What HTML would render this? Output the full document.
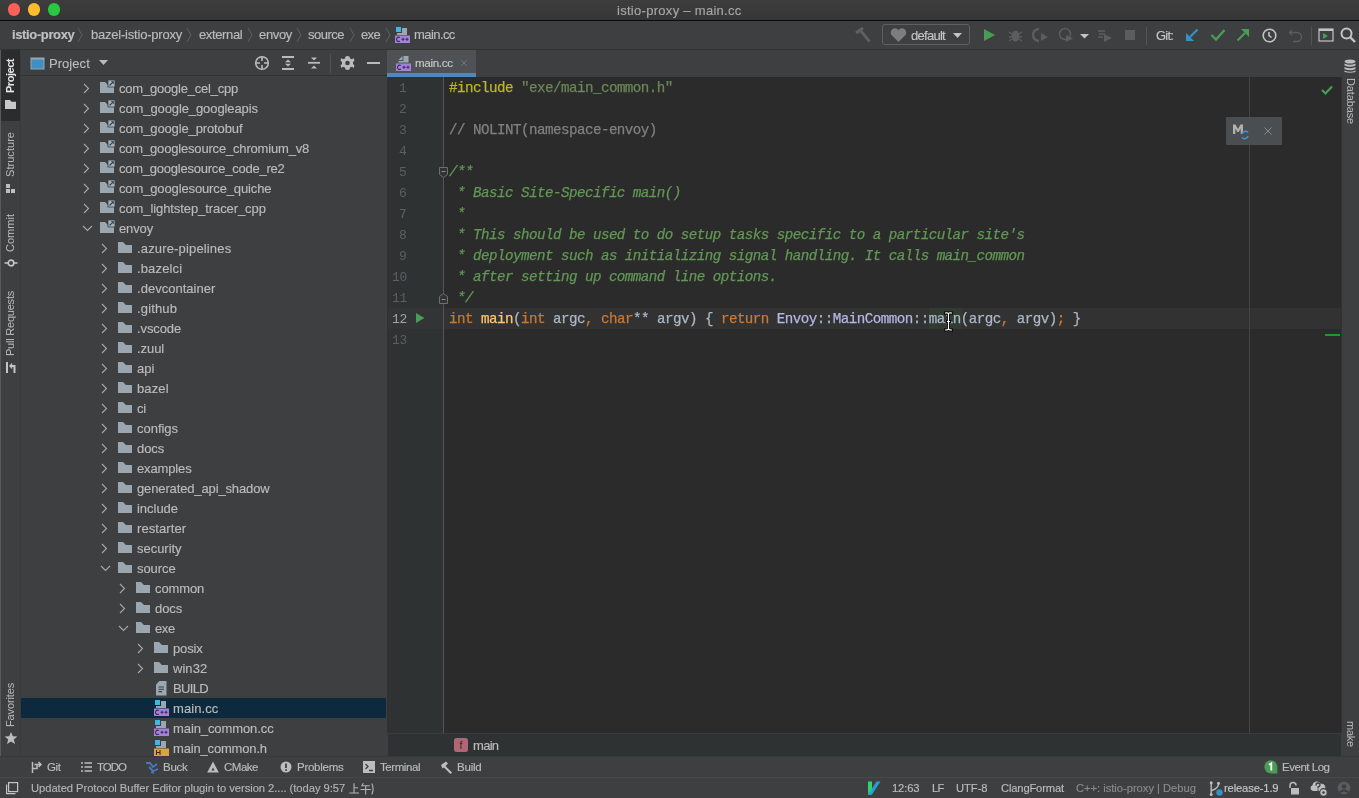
<!DOCTYPE html>
<html><head><meta charset="utf-8"><title>istio-proxy – main.cc</title>
<style>
html,body{margin:0;padding:0;width:1359px;height:798px;overflow:hidden;background:#3c3f41;}
body{position:relative;font-family:"Liberation Sans",sans-serif;}
.t{position:absolute;white-space:nowrap;font-family:"Liberation Sans",sans-serif;-webkit-text-stroke:0.15px currentColor;}
.m{position:absolute;white-space:pre;font-family:"Liberation Mono",monospace;font-size:14.2px;letter-spacing:-0.52px;line-height:14px;-webkit-text-stroke:0.25px currentColor;}
svg{overflow:visible}
.t,.m{will-change:transform}
</style></head><body>
<div style="position:absolute;left:0px;top:0px;width:1359px;height:20px;background:linear-gradient(#3d3d3d,#363636);"></div>
<div style="position:absolute;left:0px;top:20px;width:1359px;height:1px;background:#0a0a0a;"></div>
<div style="position:absolute;left:7.5px;top:3.4px;width:12.4px;height:12.4px;border-radius:50%;background:#fe5f57"></div>
<div style="position:absolute;left:27.6px;top:3.4px;width:12.4px;height:12.4px;border-radius:50%;background:#febc2e"></div>
<div style="position:absolute;left:47.5px;top:3.4px;width:12.4px;height:12.4px;border-radius:50%;background:#28c840"></div>
<div class="t" style="left:617.4px;top:4.00px;font-size:13px;line-height:13px;color:#a6a6a6;font-weight:normal;letter-spacing:0.291px;">istio-proxy – main.cc</div>
<div style="position:absolute;left:0px;top:21px;width:1359px;height:28px;background:#3e3f41;"></div>
<div style="position:absolute;left:0px;top:49px;width:1359px;height:1px;background:#323232;"></div>
<div class="t" style="left:12.4px;top:28.00px;font-size:13px;line-height:13px;color:#c0c0c0;font-weight:bold;letter-spacing:-0.369px;">istio-proxy</div>
<div class="t" style="left:91px;top:28.00px;font-size:13px;line-height:13px;color:#bbbbbb;font-weight:normal;letter-spacing:-0.215px;">bazel-istio-proxy</div>
<div class="t" style="left:199px;top:28.00px;font-size:13px;line-height:13px;color:#bbbbbb;font-weight:normal;letter-spacing:-0.369px;">external</div>
<div class="t" style="left:259px;top:28.00px;font-size:13px;line-height:13px;color:#bbbbbb;font-weight:normal;letter-spacing:-0.338px;">envoy</div>
<div class="t" style="left:308px;top:28.00px;font-size:13px;line-height:13px;color:#bbbbbb;font-weight:normal;letter-spacing:-0.503px;">source</div>
<div class="t" style="left:361px;top:28.00px;font-size:13px;line-height:13px;color:#bbbbbb;font-weight:normal;letter-spacing:-0.653px;">exe</div>
<div class="t" style="left:413.7px;top:28.00px;font-size:13px;line-height:13px;color:#bbbbbb;font-weight:normal;letter-spacing:-0.570px;">main.cc</div>
<svg style="position:absolute;left:77px;top:27px;" width="6" height="16" viewBox="0 0 6 16"><path d="M1 1 L5 8 L1 15" fill="none" stroke="#5e6060" stroke-width="1"/></svg>
<svg style="position:absolute;left:186px;top:27px;" width="6" height="16" viewBox="0 0 6 16"><path d="M1 1 L5 8 L1 15" fill="none" stroke="#5e6060" stroke-width="1"/></svg>
<svg style="position:absolute;left:246.5px;top:27px;" width="6" height="16" viewBox="0 0 6 16"><path d="M1 1 L5 8 L1 15" fill="none" stroke="#5e6060" stroke-width="1"/></svg>
<svg style="position:absolute;left:295.5px;top:27px;" width="6" height="16" viewBox="0 0 6 16"><path d="M1 1 L5 8 L1 15" fill="none" stroke="#5e6060" stroke-width="1"/></svg>
<svg style="position:absolute;left:349px;top:27px;" width="6" height="16" viewBox="0 0 6 16"><path d="M1 1 L5 8 L1 15" fill="none" stroke="#5e6060" stroke-width="1"/></svg>
<svg style="position:absolute;left:385px;top:27px;" width="6" height="16" viewBox="0 0 6 16"><path d="M1 1 L5 8 L1 15" fill="none" stroke="#5e6060" stroke-width="1"/></svg>
<svg style="position:absolute;left:395px;top:27px;" width="16" height="16" viewBox="0 0 16 16"><rect x="1" y="0" width="5" height="5" fill="#40b6e0"/><path d="M7 1 H12 V8 H2 V6 H7 Z" fill="#9aa7b0"/><rect x="0" y="8.5" width="15" height="7.5" fill="#a283d8"/><path d="M4.8 10.6 A2 2.2 0 1 0 4.8 14" stroke="#3a2a5a" stroke-width="1.1" fill="none"/><path d="M6.5 12.3 H9.5 M8 10.8 V13.8 M10.5 12.3 H13.5 M12 10.8 V13.8" stroke="#3a2a5a" stroke-width="1.1"/></svg>
<svg style="position:absolute;left:854px;top:26px;" width="17" height="17" viewBox="0 0 17 17"><path d="M2 7 L9 2" stroke="#5f5f5f" stroke-width="3.2" stroke-linecap="butt"/><path d="M6.5 4.5 L15.5 15.5" stroke="#5f5f5f" stroke-width="2.8"/></svg>
<div style="position:absolute;left:882px;top:24px;width:88px;height:21px;border:1px solid #5e6060;border-radius:3px;box-sizing:border-box"></div>
<svg style="position:absolute;left:890px;top:27px;" width="17" height="16" viewBox="0 0 17 16"><path d="M8.5 15 L1 7.5 Q0 3 3.5 1.5 Q6.5 0.5 8.5 3 Q10.5 0.5 13.5 1.5 Q17 3 16 7.5 Z" fill="#7d7d7d"/></svg>
<div class="t" style="left:911px;top:28.50px;font-size:13px;line-height:13px;color:#c4c4c4;font-weight:normal;letter-spacing:-0.719px;">default</div>
<svg style="position:absolute;left:953px;top:33px;" width="9" height="6" viewBox="0 0 9 6"><path d="M0 0 H9 L4.5 5 Z" fill="#c4c4c4"/></svg>
<svg style="position:absolute;left:984px;top:29px;" width="11" height="12" viewBox="0 0 11 12"><path d="M0 0 L11 6 L0 12 Z" fill="#499c54"/></svg>
<svg style="position:absolute;left:1008px;top:27px;" width="15" height="16" viewBox="0 0 15 16"><ellipse cx="7.5" cy="9" rx="4" ry="5.5" fill="#5d5d5d"/><path d="M1 5 L4 7 M14 5 L11 7 M1 10 H3.5 M14 10 H11.5 M1 14 L4 12 M14 14 L11 12" stroke="#5d5d5d" stroke-width="1.3"/></svg>
<svg style="position:absolute;left:1033px;top:27px;" width="16" height="16" viewBox="0 0 16 16"><path d="M6 2 A6 6 0 1 0 6 14" stroke="#5d5d5d" stroke-width="2.5" fill="none"/><path d="M8 6 L15 10 L8 14 Z" fill="#5d5d5d"/></svg>
<svg style="position:absolute;left:1058px;top:27px;" width="16" height="16" viewBox="0 0 16 16"><circle cx="7" cy="7" r="5.5" stroke="#5d5d5d" stroke-width="1.5" fill="none"/><path d="M8 8 L15 11.5 L8 15 Z" fill="#5d5d5d"/></svg>
<svg style="position:absolute;left:1080px;top:34px;" width="9" height="5" viewBox="0 0 9 5"><path d="M0 0 H9 L4.5 4.5 Z" fill="#c4c4c4"/></svg>
<svg style="position:absolute;left:1097px;top:27px;" width="16" height="16" viewBox="0 0 16 16"><path d="M1 4 H8 M2 7 H8 M1 10 H6" stroke="#5d5d5d" stroke-width="1.5"/><path d="M7 7 L15 11 L7 15 Z" fill="#5d5d5d"/></svg>
<div style="position:absolute;left:1124.6px;top:30px;width:10.5px;height:10px;background:#5d5d5d;"></div>
<div style="position:absolute;left:1146px;top:27px;width:1px;height:18px;background:#545454;"></div>
<div class="t" style="left:1156px;top:28.50px;font-size:13px;line-height:13px;color:#c4c4c4;font-weight:normal;letter-spacing:-0.806px;">Git:</div>
<svg style="position:absolute;left:1185px;top:28px;" width="14" height="14" viewBox="0 0 14 14"><path d="M12.5 1.5 L5 9" stroke="#3592c4" stroke-width="2.2" fill="none"/><path d="M1 13 V5 L9 13 Z" fill="#3592c4"/></svg>
<svg style="position:absolute;left:1210px;top:28px;" width="16" height="14" viewBox="0 0 16 14"><path d="M1.5 7 L6 11.5 L14.5 2" stroke="#499c54" stroke-width="2.4" fill="none"/></svg>
<svg style="position:absolute;left:1236px;top:28px;" width="14" height="14" viewBox="0 0 14 14"><path d="M1.5 12.5 L9 5" stroke="#499c54" stroke-width="2.2" fill="none"/><path d="M13 1 V9 L5 1 Z" fill="#499c54"/></svg>
<svg style="position:absolute;left:1262px;top:28px;" width="15" height="15" viewBox="0 0 15 15"><circle cx="7.5" cy="7.5" r="6.3" stroke="#c4c4c4" stroke-width="1.6" fill="none"/><path d="M7 4 V7.5 L9.5 9.5" stroke="#c4c4c4" stroke-width="1.6" fill="none"/></svg>
<svg style="position:absolute;left:1288px;top:28px;" width="15" height="15" viewBox="0 0 15 15"><path d="M4 2 L1.5 4.5 L4 7 M1.5 4.5 H9 A4.5 4.5 0 0 1 9 13.5 H5" stroke="#5d5d5d" stroke-width="1.3" fill="none"/></svg>
<div style="position:absolute;left:1311px;top:27px;width:1px;height:18px;background:#545454;"></div>
<svg style="position:absolute;left:1318px;top:28px;" width="16" height="14" viewBox="0 0 16 14"><rect x="1" y="1" width="14" height="12" stroke="#c4c4c4" stroke-width="1.2" fill="none"/><rect x="1" y="1" width="14" height="2" fill="#c4c4c4"/><path d="M5 5 L10 8 L5 11 Z" fill="#499c54"/></svg>
<svg style="position:absolute;left:1340px;top:27px;" width="16" height="16" viewBox="0 0 16 16"><circle cx="6.5" cy="6.5" r="5" stroke="#c4c4c4" stroke-width="2" fill="none"/><path d="M10 10 L15 15" stroke="#c4c4c4" stroke-width="2.4"/></svg>
<div style="position:absolute;left:0px;top:50px;width:21px;height:707px;background:#3e3f41;"></div>
<div style="position:absolute;left:0px;top:50px;width:1px;height:748px;background:#5a5a5a;"></div>
<div style="position:absolute;left:1px;top:50px;width:20px;height:71px;background:#2a2c2e;"></div>
<div style="position:absolute;left:20px;top:50px;width:1px;height:707px;background:#393a3c;"></div>
<div class="t" style="-webkit-text-stroke:0;left:5px;top:93px;font-size:11px;line-height:11px;color:#e6e6e6;font-weight:bold;letter-spacing:-0.470px;transform-origin:0 0;transform:rotate(-90deg);">Project</div>
<svg style="position:absolute;left:5px;top:100px;" width="12" height="10" viewBox="0 0 12 10"><path d="M0 0 H5 L6.5 1.8 H11 V9 H0 Z" fill="#c8c8c8"/></svg>
<div class="t" style="-webkit-text-stroke:0;left:5px;top:177px;font-size:11px;line-height:11px;color:#bbbbbb;font-weight:normal;letter-spacing:0.041px;transform-origin:0 0;transform:rotate(-90deg);">Structure</div>
<svg style="position:absolute;left:5px;top:183px;" width="12" height="11" viewBox="0 0 12 11"><rect x="1" y="1" width="4" height="4" fill="#bdbdbd"/><rect x="1" y="6" width="4" height="4" fill="#bdbdbd"/><rect x="6" y="6" width="4" height="4" fill="#bdbdbd"/></svg>
<div class="t" style="-webkit-text-stroke:0;left:5px;top:252px;font-size:11px;line-height:11px;color:#bbbbbb;font-weight:normal;letter-spacing:0.019px;transform-origin:0 0;transform:rotate(-90deg);">Commit</div>
<svg style="position:absolute;left:4px;top:256px;" width="14" height="14" viewBox="0 0 14 14"><circle cx="7" cy="7" r="2.8" stroke="#c4c4c4" stroke-width="1.7" fill="none"/><path d="M0.5 7 H4 M10 7 H13.5" stroke="#c4c4c4" stroke-width="1.7"/></svg>
<div class="t" style="-webkit-text-stroke:0;left:5px;top:356px;font-size:11px;line-height:11px;color:#bbbbbb;font-weight:normal;letter-spacing:-0.221px;transform-origin:0 0;transform:rotate(-90deg);">Pull Requests</div>
<svg style="position:absolute;left:5px;top:361px;" width="12" height="13" viewBox="0 0 12 13"><rect x="1" y="1" width="2" height="11" fill="#c4c4c4"/><path d="M9.5 12 V5 H6" stroke="#c4c4c4" stroke-width="2" fill="none"/><path d="M4 5 L7.2 1.8 V8.2 Z" fill="#c4c4c4"/></svg>
<div class="t" style="-webkit-text-stroke:0;left:5px;top:727px;font-size:11px;line-height:11px;color:#bbbbbb;font-weight:normal;letter-spacing:-0.137px;transform-origin:0 0;transform:rotate(-90deg);">Favorites</div>
<svg style="position:absolute;left:4px;top:731px;" width="14" height="14" viewBox="0 0 14 14"><path d="M7 1 L8.8 5.3 L13.3 5.5 L9.8 8.4 L11 12.9 L7 10.4 L3 12.9 L4.2 8.4 L0.7 5.5 L5.2 5.3 Z" fill="#bdbdbd"/></svg>
<div style="position:absolute;left:21px;top:50px;width:366px;height:707px;background:#3e3f41;"></div>
<div style="position:absolute;left:21px;top:75px;width:366px;height:1px;background:#323232;"></div>
<svg style="position:absolute;left:30px;top:57px;" width="15" height="13" viewBox="0 0 15 13"><rect x="0.5" y="0.5" width="14" height="12" fill="#9aa7b0"/><rect x="1.5" y="2.5" width="12" height="9" fill="#3d8fc4"/></svg>
<div class="t" style="left:49.4px;top:57.00px;font-size:13px;line-height:13px;color:#bbbbbb;font-weight:normal;letter-spacing:0.048px;">Project</div>
<svg style="position:absolute;left:99px;top:60px;" width="9" height="6" viewBox="0 0 9 6"><path d="M0 0 H9 L4.5 5 Z" fill="#bbbbbb"/></svg>
<svg style="position:absolute;left:254px;top:55px;" width="16" height="16" viewBox="0 0 16 16"><circle cx="8" cy="8" r="6.3" stroke="#bbbbbb" stroke-width="1.6" fill="none"/><path d="M8 2 V6 M8 10 V14 M2 8 H6 M10 8 H14" stroke="#bbbbbb" stroke-width="1.6"/></svg>
<svg style="position:absolute;left:281px;top:55px;" width="14" height="16" viewBox="0 0 14 16"><path d="M1 2 H13 M1 14 H13" stroke="#bbbbbb" stroke-width="2"/><path d="M4 7.2 L7 4.6 L10 7.2 Z M4 8.8 L7 11.4 L10 8.8 Z" fill="#bbbbbb"/></svg>
<svg style="position:absolute;left:307px;top:55px;" width="14" height="16" viewBox="0 0 14 16"><path d="M1 7.8 H13" stroke="#bbbbbb" stroke-width="1.8"/><path d="M4 2.5 H10 L7 5.5 Z M4 13.5 H10 L7 10.5 Z" fill="#bbbbbb"/></svg>
<div style="position:absolute;left:330px;top:54px;width:1px;height:19px;background:#505254;"></div>
<svg style="position:absolute;left:340px;top:55px;" width="15" height="16" viewBox="0 0 15 16"><path d="M7.5 1 L9.5 1.6 L10 3.6 L12 4.2 L13.6 2.9 L14.5 5.6 L13 7 L13 9 L14.5 10.4 L13.6 13.1 L12 11.8 L10 12.4 L9.5 14.4 L7.5 15 L5.5 14.4 L5 12.4 L3 11.8 L1.4 13.1 L0.5 10.4 L2 9 L2 7 L0.5 5.6 L1.4 2.9 L3 4.2 L5 3.6 L5.5 1.6 Z" fill="#bbbbbb"/><circle cx="7.5" cy="8" r="2.3" fill="#3e3f41"/></svg>
<div style="position:absolute;left:367px;top:62px;width:13px;height:2px;background:#bbbbbb;"></div>
<svg style="position:absolute;left:83.2px;top:82.5px;" width="7" height="11" viewBox="0 0 7 11"><path d="M1 1 L5.5 5.5 L1 10" stroke="#a8a8a8" stroke-width="1.1" fill="none"/></svg>
<svg style="position:absolute;left:100px;top:80px;" width="15" height="14" viewBox="0 0 15 14"><path d="M0 2 H5 L8 5 H14 V13 H0 Z" fill="#9aa7b0"/><rect x="8" y="0" width="7" height="7" fill="#a9b4bb" stroke="#3e3f41" stroke-width="0.8"/><path d="M9.5 5.5 L13.2 1.8" stroke="#2a4560" stroke-width="1.1"/><path d="M10.8 1.2 H13.8 V4.2 Z" fill="#2a4560"/></svg>
<div class="t" style="left:118.5px;top:82.00px;font-size:13px;line-height:13px;color:#bbbbbb;font-weight:normal;letter-spacing:-0.215px;">com_google_cel_cpp</div>
<svg style="position:absolute;left:83.2px;top:102.5px;" width="7" height="11" viewBox="0 0 7 11"><path d="M1 1 L5.5 5.5 L1 10" stroke="#a8a8a8" stroke-width="1.1" fill="none"/></svg>
<svg style="position:absolute;left:100px;top:100px;" width="15" height="14" viewBox="0 0 15 14"><path d="M0 2 H5 L8 5 H14 V13 H0 Z" fill="#9aa7b0"/><rect x="8" y="0" width="7" height="7" fill="#a9b4bb" stroke="#3e3f41" stroke-width="0.8"/><path d="M9.5 5.5 L13.2 1.8" stroke="#2a4560" stroke-width="1.1"/><path d="M10.8 1.2 H13.8 V4.2 Z" fill="#2a4560"/></svg>
<div class="t" style="left:118.5px;top:102.00px;font-size:13px;line-height:13px;color:#bbbbbb;font-weight:normal;letter-spacing:-0.098px;">com_google_googleapis</div>
<svg style="position:absolute;left:83.2px;top:122.5px;" width="7" height="11" viewBox="0 0 7 11"><path d="M1 1 L5.5 5.5 L1 10" stroke="#a8a8a8" stroke-width="1.1" fill="none"/></svg>
<svg style="position:absolute;left:100px;top:120px;" width="15" height="14" viewBox="0 0 15 14"><path d="M0 2 H5 L8 5 H14 V13 H0 Z" fill="#9aa7b0"/><rect x="8" y="0" width="7" height="7" fill="#a9b4bb" stroke="#3e3f41" stroke-width="0.8"/><path d="M9.5 5.5 L13.2 1.8" stroke="#2a4560" stroke-width="1.1"/><path d="M10.8 1.2 H13.8 V4.2 Z" fill="#2a4560"/></svg>
<div class="t" style="left:118.5px;top:122.00px;font-size:13px;line-height:13px;color:#bbbbbb;font-weight:normal;letter-spacing:-0.124px;">com_google_protobuf</div>
<svg style="position:absolute;left:83.2px;top:142.5px;" width="7" height="11" viewBox="0 0 7 11"><path d="M1 1 L5.5 5.5 L1 10" stroke="#a8a8a8" stroke-width="1.1" fill="none"/></svg>
<svg style="position:absolute;left:100px;top:140px;" width="15" height="14" viewBox="0 0 15 14"><path d="M0 2 H5 L8 5 H14 V13 H0 Z" fill="#9aa7b0"/><rect x="8" y="0" width="7" height="7" fill="#a9b4bb" stroke="#3e3f41" stroke-width="0.8"/><path d="M9.5 5.5 L13.2 1.8" stroke="#2a4560" stroke-width="1.1"/><path d="M10.8 1.2 H13.8 V4.2 Z" fill="#2a4560"/></svg>
<div class="t" style="left:118.5px;top:142.00px;font-size:13px;line-height:13px;color:#bbbbbb;font-weight:normal;letter-spacing:-0.179px;">com_googlesource_chromium_v8</div>
<svg style="position:absolute;left:83.2px;top:162.5px;" width="7" height="11" viewBox="0 0 7 11"><path d="M1 1 L5.5 5.5 L1 10" stroke="#a8a8a8" stroke-width="1.1" fill="none"/></svg>
<svg style="position:absolute;left:100px;top:160px;" width="15" height="14" viewBox="0 0 15 14"><path d="M0 2 H5 L8 5 H14 V13 H0 Z" fill="#9aa7b0"/><rect x="8" y="0" width="7" height="7" fill="#a9b4bb" stroke="#3e3f41" stroke-width="0.8"/><path d="M9.5 5.5 L13.2 1.8" stroke="#2a4560" stroke-width="1.1"/><path d="M10.8 1.2 H13.8 V4.2 Z" fill="#2a4560"/></svg>
<div class="t" style="left:118.5px;top:162.00px;font-size:13px;line-height:13px;color:#bbbbbb;font-weight:normal;letter-spacing:-0.232px;">com_googlesource_code_re2</div>
<svg style="position:absolute;left:83.2px;top:182.5px;" width="7" height="11" viewBox="0 0 7 11"><path d="M1 1 L5.5 5.5 L1 10" stroke="#a8a8a8" stroke-width="1.1" fill="none"/></svg>
<svg style="position:absolute;left:100px;top:180px;" width="15" height="14" viewBox="0 0 15 14"><path d="M0 2 H5 L8 5 H14 V13 H0 Z" fill="#9aa7b0"/><rect x="8" y="0" width="7" height="7" fill="#a9b4bb" stroke="#3e3f41" stroke-width="0.8"/><path d="M9.5 5.5 L13.2 1.8" stroke="#2a4560" stroke-width="1.1"/><path d="M10.8 1.2 H13.8 V4.2 Z" fill="#2a4560"/></svg>
<div class="t" style="left:118.5px;top:182.00px;font-size:13px;line-height:13px;color:#bbbbbb;font-weight:normal;letter-spacing:-0.130px;">com_googlesource_quiche</div>
<svg style="position:absolute;left:83.2px;top:202.5px;" width="7" height="11" viewBox="0 0 7 11"><path d="M1 1 L5.5 5.5 L1 10" stroke="#a8a8a8" stroke-width="1.1" fill="none"/></svg>
<svg style="position:absolute;left:100px;top:200px;" width="15" height="14" viewBox="0 0 15 14"><path d="M0 2 H5 L8 5 H14 V13 H0 Z" fill="#9aa7b0"/><rect x="8" y="0" width="7" height="7" fill="#a9b4bb" stroke="#3e3f41" stroke-width="0.8"/><path d="M9.5 5.5 L13.2 1.8" stroke="#2a4560" stroke-width="1.1"/><path d="M10.8 1.2 H13.8 V4.2 Z" fill="#2a4560"/></svg>
<div class="t" style="left:118.5px;top:202.00px;font-size:13px;line-height:13px;color:#bbbbbb;font-weight:normal;letter-spacing:-0.086px;">com_lightstep_tracer_cpp</div>
<svg style="position:absolute;left:82.2px;top:224.5px;" width="11" height="7" viewBox="0 0 11 7"><path d="M1 1 L5.5 5.5 L10 1" stroke="#a8a8a8" stroke-width="1.1" fill="none"/></svg>
<svg style="position:absolute;left:100px;top:220px;" width="15" height="14" viewBox="0 0 15 14"><path d="M0 2 H5 L8 5 H14 V13 H0 Z" fill="#9aa7b0"/><rect x="8" y="0" width="7" height="7" fill="#a9b4bb" stroke="#3e3f41" stroke-width="0.8"/><path d="M9.5 5.5 L13.2 1.8" stroke="#2a4560" stroke-width="1.1"/><path d="M10.8 1.2 H13.8 V4.2 Z" fill="#2a4560"/></svg>
<div class="t" style="left:118.5px;top:222.00px;font-size:13px;line-height:13px;color:#bbbbbb;font-weight:normal;letter-spacing:-0.138px;">envoy</div>
<svg style="position:absolute;left:101.2px;top:242.5px;" width="7" height="11" viewBox="0 0 7 11"><path d="M1 1 L5.5 5.5 L1 10" stroke="#a8a8a8" stroke-width="1.1" fill="none"/></svg>
<svg style="position:absolute;left:118px;top:240px;" width="15" height="14" viewBox="0 0 15 14"><path d="M0 2 H5 L8 5 H14 V13 H0 Z" fill="#9aa7b0"/></svg>
<div class="t" style="left:136.5px;top:242.00px;font-size:13px;line-height:13px;color:#bbbbbb;font-weight:normal;letter-spacing:0.158px;">.azure-pipelines</div>
<svg style="position:absolute;left:101.2px;top:262.5px;" width="7" height="11" viewBox="0 0 7 11"><path d="M1 1 L5.5 5.5 L1 10" stroke="#a8a8a8" stroke-width="1.1" fill="none"/></svg>
<svg style="position:absolute;left:118px;top:260px;" width="15" height="14" viewBox="0 0 15 14"><path d="M0 2 H5 L8 5 H14 V13 H0 Z" fill="#9aa7b0"/></svg>
<div class="t" style="left:136.5px;top:262.00px;font-size:13px;line-height:13px;color:#bbbbbb;font-weight:normal;letter-spacing:0.140px;">.bazelci</div>
<svg style="position:absolute;left:101.2px;top:282.5px;" width="7" height="11" viewBox="0 0 7 11"><path d="M1 1 L5.5 5.5 L1 10" stroke="#a8a8a8" stroke-width="1.1" fill="none"/></svg>
<svg style="position:absolute;left:118px;top:280px;" width="15" height="14" viewBox="0 0 15 14"><path d="M0 2 H5 L8 5 H14 V13 H0 Z" fill="#9aa7b0"/></svg>
<div class="t" style="left:136.5px;top:282.00px;font-size:13px;line-height:13px;color:#bbbbbb;font-weight:normal;letter-spacing:0.019px;">.devcontainer</div>
<svg style="position:absolute;left:101.2px;top:302.5px;" width="7" height="11" viewBox="0 0 7 11"><path d="M1 1 L5.5 5.5 L1 10" stroke="#a8a8a8" stroke-width="1.1" fill="none"/></svg>
<svg style="position:absolute;left:118px;top:300px;" width="15" height="14" viewBox="0 0 15 14"><path d="M0 2 H5 L8 5 H14 V13 H0 Z" fill="#9aa7b0"/></svg>
<div class="t" style="left:136.5px;top:302.00px;font-size:13px;line-height:13px;color:#bbbbbb;font-weight:normal;letter-spacing:0.152px;">.github</div>
<svg style="position:absolute;left:101.2px;top:322.5px;" width="7" height="11" viewBox="0 0 7 11"><path d="M1 1 L5.5 5.5 L1 10" stroke="#a8a8a8" stroke-width="1.1" fill="none"/></svg>
<svg style="position:absolute;left:118px;top:320px;" width="15" height="14" viewBox="0 0 15 14"><path d="M0 2 H5 L8 5 H14 V13 H0 Z" fill="#9aa7b0"/></svg>
<div class="t" style="left:136.5px;top:322.00px;font-size:13px;line-height:13px;color:#bbbbbb;font-weight:normal;letter-spacing:-0.115px;">.vscode</div>
<svg style="position:absolute;left:101.2px;top:342.5px;" width="7" height="11" viewBox="0 0 7 11"><path d="M1 1 L5.5 5.5 L1 10" stroke="#a8a8a8" stroke-width="1.1" fill="none"/></svg>
<svg style="position:absolute;left:118px;top:340px;" width="15" height="14" viewBox="0 0 15 14"><path d="M0 2 H5 L8 5 H14 V13 H0 Z" fill="#9aa7b0"/></svg>
<div class="t" style="left:136.5px;top:342.00px;font-size:13px;line-height:13px;color:#bbbbbb;font-weight:normal;letter-spacing:-0.052px;">.zuul</div>
<svg style="position:absolute;left:101.2px;top:362.5px;" width="7" height="11" viewBox="0 0 7 11"><path d="M1 1 L5.5 5.5 L1 10" stroke="#a8a8a8" stroke-width="1.1" fill="none"/></svg>
<svg style="position:absolute;left:118px;top:360px;" width="15" height="14" viewBox="0 0 15 14"><path d="M0 2 H5 L8 5 H14 V13 H0 Z" fill="#9aa7b0"/></svg>
<div class="t" style="left:136.5px;top:362.00px;font-size:13px;line-height:13px;color:#bbbbbb;font-weight:normal;letter-spacing:0.050px;">api</div>
<svg style="position:absolute;left:101.2px;top:382.5px;" width="7" height="11" viewBox="0 0 7 11"><path d="M1 1 L5.5 5.5 L1 10" stroke="#a8a8a8" stroke-width="1.1" fill="none"/></svg>
<svg style="position:absolute;left:118px;top:380px;" width="15" height="14" viewBox="0 0 15 14"><path d="M0 2 H5 L8 5 H14 V13 H0 Z" fill="#9aa7b0"/></svg>
<div class="t" style="left:136.5px;top:382.00px;font-size:13px;line-height:13px;color:#bbbbbb;font-weight:normal;letter-spacing:0.124px;">bazel</div>
<svg style="position:absolute;left:101.2px;top:402.5px;" width="7" height="11" viewBox="0 0 7 11"><path d="M1 1 L5.5 5.5 L1 10" stroke="#a8a8a8" stroke-width="1.1" fill="none"/></svg>
<svg style="position:absolute;left:118px;top:400px;" width="15" height="14" viewBox="0 0 15 14"><path d="M0 2 H5 L8 5 H14 V13 H0 Z" fill="#9aa7b0"/></svg>
<div class="t" style="left:136.5px;top:402.00px;font-size:13px;line-height:13px;color:#bbbbbb;font-weight:normal;letter-spacing:-0.144px;">ci</div>
<svg style="position:absolute;left:101.2px;top:422.5px;" width="7" height="11" viewBox="0 0 7 11"><path d="M1 1 L5.5 5.5 L1 10" stroke="#a8a8a8" stroke-width="1.1" fill="none"/></svg>
<svg style="position:absolute;left:118px;top:420px;" width="15" height="14" viewBox="0 0 15 14"><path d="M0 2 H5 L8 5 H14 V13 H0 Z" fill="#9aa7b0"/></svg>
<div class="t" style="left:136.5px;top:422.00px;font-size:13px;line-height:13px;color:#bbbbbb;font-weight:normal;letter-spacing:-0.027px;">configs</div>
<svg style="position:absolute;left:101.2px;top:442.5px;" width="7" height="11" viewBox="0 0 7 11"><path d="M1 1 L5.5 5.5 L1 10" stroke="#a8a8a8" stroke-width="1.1" fill="none"/></svg>
<svg style="position:absolute;left:118px;top:440px;" width="15" height="14" viewBox="0 0 15 14"><path d="M0 2 H5 L8 5 H14 V13 H0 Z" fill="#9aa7b0"/></svg>
<div class="t" style="left:136.5px;top:442.00px;font-size:13px;line-height:13px;color:#bbbbbb;font-weight:normal;letter-spacing:-0.065px;">docs</div>
<svg style="position:absolute;left:101.2px;top:462.5px;" width="7" height="11" viewBox="0 0 7 11"><path d="M1 1 L5.5 5.5 L1 10" stroke="#a8a8a8" stroke-width="1.1" fill="none"/></svg>
<svg style="position:absolute;left:118px;top:460px;" width="15" height="14" viewBox="0 0 15 14"><path d="M0 2 H5 L8 5 H14 V13 H0 Z" fill="#9aa7b0"/></svg>
<div class="t" style="left:136.5px;top:462.00px;font-size:13px;line-height:13px;color:#bbbbbb;font-weight:normal;letter-spacing:-0.142px;">examples</div>
<svg style="position:absolute;left:101.2px;top:482.5px;" width="7" height="11" viewBox="0 0 7 11"><path d="M1 1 L5.5 5.5 L1 10" stroke="#a8a8a8" stroke-width="1.1" fill="none"/></svg>
<svg style="position:absolute;left:118px;top:480px;" width="15" height="14" viewBox="0 0 15 14"><path d="M0 2 H5 L8 5 H14 V13 H0 Z" fill="#9aa7b0"/></svg>
<div class="t" style="left:136.5px;top:482.00px;font-size:13px;line-height:13px;color:#bbbbbb;font-weight:normal;letter-spacing:-0.134px;">generated_api_shadow</div>
<svg style="position:absolute;left:101.2px;top:502.5px;" width="7" height="11" viewBox="0 0 7 11"><path d="M1 1 L5.5 5.5 L1 10" stroke="#a8a8a8" stroke-width="1.1" fill="none"/></svg>
<svg style="position:absolute;left:118px;top:500px;" width="15" height="14" viewBox="0 0 15 14"><path d="M0 2 H5 L8 5 H14 V13 H0 Z" fill="#9aa7b0"/></svg>
<div class="t" style="left:136.5px;top:502.00px;font-size:13px;line-height:13px;color:#bbbbbb;font-weight:normal;letter-spacing:-0.028px;">include</div>
<svg style="position:absolute;left:101.2px;top:522.5px;" width="7" height="11" viewBox="0 0 7 11"><path d="M1 1 L5.5 5.5 L1 10" stroke="#a8a8a8" stroke-width="1.1" fill="none"/></svg>
<svg style="position:absolute;left:118px;top:520px;" width="15" height="14" viewBox="0 0 15 14"><path d="M0 2 H5 L8 5 H14 V13 H0 Z" fill="#9aa7b0"/></svg>
<div class="t" style="left:136.5px;top:522.00px;font-size:13px;line-height:13px;color:#bbbbbb;font-weight:normal;letter-spacing:0.077px;">restarter</div>
<svg style="position:absolute;left:101.2px;top:542.5px;" width="7" height="11" viewBox="0 0 7 11"><path d="M1 1 L5.5 5.5 L1 10" stroke="#a8a8a8" stroke-width="1.1" fill="none"/></svg>
<svg style="position:absolute;left:118px;top:540px;" width="15" height="14" viewBox="0 0 15 14"><path d="M0 2 H5 L8 5 H14 V13 H0 Z" fill="#9aa7b0"/></svg>
<div class="t" style="left:136.5px;top:542.00px;font-size:13px;line-height:13px;color:#bbbbbb;font-weight:normal;letter-spacing:-0.024px;">security</div>
<svg style="position:absolute;left:100.2px;top:564.5px;" width="11" height="7" viewBox="0 0 11 7"><path d="M1 1 L5.5 5.5 L10 1" stroke="#a8a8a8" stroke-width="1.1" fill="none"/></svg>
<svg style="position:absolute;left:118px;top:560px;" width="15" height="14" viewBox="0 0 15 14"><path d="M0 2 H5 L8 5 H14 V13 H0 Z" fill="#9aa7b0"/></svg>
<div class="t" style="left:136.5px;top:562.00px;font-size:13px;line-height:13px;color:#bbbbbb;font-weight:normal;letter-spacing:-0.070px;">source</div>
<svg style="position:absolute;left:119.2px;top:582.5px;" width="7" height="11" viewBox="0 0 7 11"><path d="M1 1 L5.5 5.5 L1 10" stroke="#a8a8a8" stroke-width="1.1" fill="none"/></svg>
<svg style="position:absolute;left:136px;top:580px;" width="15" height="14" viewBox="0 0 15 14"><path d="M0 2 H5 L8 5 H14 V13 H0 Z" fill="#9aa7b0"/></svg>
<div class="t" style="left:154.5px;top:582.00px;font-size:13px;line-height:13px;color:#bbbbbb;font-weight:normal;letter-spacing:-0.108px;">common</div>
<svg style="position:absolute;left:119.2px;top:602.5px;" width="7" height="11" viewBox="0 0 7 11"><path d="M1 1 L5.5 5.5 L1 10" stroke="#a8a8a8" stroke-width="1.1" fill="none"/></svg>
<svg style="position:absolute;left:136px;top:600px;" width="15" height="14" viewBox="0 0 15 14"><path d="M0 2 H5 L8 5 H14 V13 H0 Z" fill="#9aa7b0"/></svg>
<div class="t" style="left:154.5px;top:602.00px;font-size:13px;line-height:13px;color:#bbbbbb;font-weight:normal;letter-spacing:-0.065px;">docs</div>
<svg style="position:absolute;left:118.2px;top:624.5px;" width="11" height="7" viewBox="0 0 11 7"><path d="M1 1 L5.5 5.5 L10 1" stroke="#a8a8a8" stroke-width="1.1" fill="none"/></svg>
<svg style="position:absolute;left:136px;top:620px;" width="15" height="14" viewBox="0 0 15 14"><path d="M0 2 H5 L8 5 H14 V13 H0 Z" fill="#9aa7b0"/></svg>
<div class="t" style="left:154.5px;top:622.00px;font-size:13px;line-height:13px;color:#bbbbbb;font-weight:normal;letter-spacing:-0.420px;">exe</div>
<svg style="position:absolute;left:137.2px;top:642.5px;" width="7" height="11" viewBox="0 0 7 11"><path d="M1 1 L5.5 5.5 L1 10" stroke="#a8a8a8" stroke-width="1.1" fill="none"/></svg>
<svg style="position:absolute;left:154px;top:640px;" width="15" height="14" viewBox="0 0 15 14"><path d="M0 2 H5 L8 5 H14 V13 H0 Z" fill="#9aa7b0"/></svg>
<div class="t" style="left:172.5px;top:642.00px;font-size:13px;line-height:13px;color:#bbbbbb;font-weight:normal;letter-spacing:-0.130px;">posix</div>
<svg style="position:absolute;left:137.2px;top:662.5px;" width="7" height="11" viewBox="0 0 7 11"><path d="M1 1 L5.5 5.5 L1 10" stroke="#a8a8a8" stroke-width="1.1" fill="none"/></svg>
<svg style="position:absolute;left:154px;top:660px;" width="15" height="14" viewBox="0 0 15 14"><path d="M0 2 H5 L8 5 H14 V13 H0 Z" fill="#9aa7b0"/></svg>
<div class="t" style="left:172.5px;top:662.00px;font-size:13px;line-height:13px;color:#bbbbbb;font-weight:normal;letter-spacing:0.046px;">win32</div>
<svg style="position:absolute;left:155.8px;top:680.7px;" width="11" height="15" viewBox="0 0 11 15"><path d="M0 3.5 L3.5 0 H10.5 V14.5 H0 Z" fill="#9aa7b0"/><path d="M2.5 6 H8 M2.5 8.3 H8 M2.5 10.6 H6" stroke="#3c3f41" stroke-width="1.1"/></svg>
<div class="t" style="left:172.5px;top:682.00px;font-size:13px;line-height:13px;color:#bbbbbb;font-weight:normal;letter-spacing:-0.638px;">BUILD</div>
<div style="position:absolute;left:21px;top:698px;width:365px;height:20px;background:#0d293e;"></div>
<svg style="position:absolute;left:154px;top:700px;" width="16" height="16" viewBox="0 0 16 16"><rect x="1" y="0" width="5" height="5" fill="#40b6e0"/><path d="M7 1 H12 V8 H2 V6 H7 Z" fill="#9aa7b0"/><rect x="0" y="8.5" width="15" height="7.5" fill="#a283d8"/><path d="M4.8 10.6 A2 2.2 0 1 0 4.8 14" stroke="#3a2a5a" stroke-width="1.1" fill="none"/><path d="M6.5 12.3 H9.5 M8 10.8 V13.8 M10.5 12.3 H13.5 M12 10.8 V13.8" stroke="#3a2a5a" stroke-width="1.1"/></svg>
<div class="t" style="left:172.5px;top:702.00px;font-size:13px;line-height:13px;color:#bbbbbb;font-weight:normal;letter-spacing:0.073px;">main.cc</div>
<svg style="position:absolute;left:154px;top:720px;" width="16" height="16" viewBox="0 0 16 16"><rect x="1" y="0" width="5" height="5" fill="#40b6e0"/><path d="M7 1 H12 V8 H2 V6 H7 Z" fill="#9aa7b0"/><rect x="0" y="8.5" width="15" height="7.5" fill="#a283d8"/><path d="M4.8 10.6 A2 2.2 0 1 0 4.8 14" stroke="#3a2a5a" stroke-width="1.1" fill="none"/><path d="M6.5 12.3 H9.5 M8 10.8 V13.8 M10.5 12.3 H13.5 M12 10.8 V13.8" stroke="#3a2a5a" stroke-width="1.1"/></svg>
<div class="t" style="left:172.5px;top:722.00px;font-size:13px;line-height:13px;color:#bbbbbb;font-weight:normal;letter-spacing:-0.091px;">main_common.cc</div>
<svg style="position:absolute;left:154px;top:740px;" width="16" height="16" viewBox="0 0 16 16"><rect x="1" y="0" width="5" height="5" fill="#40b6e0"/><path d="M7 1 H12 V8 H2 V6 H7 Z" fill="#9aa7b0"/><rect x="0" y="8.5" width="15" height="7.5" fill="#d9a540"/><path d="M2.5 10 V15 M6 10 V15 M2.5 12.5 H6" stroke="#3a2a10" stroke-width="1.1"/></svg>
<div class="t" style="left:172.5px;top:742.00px;font-size:13px;line-height:13px;color:#bbbbbb;font-weight:normal;letter-spacing:-0.169px;">main_common.h</div>
<div style="position:absolute;left:387px;top:77px;width:1px;height:656px;background:#2f3233;"></div>
<div style="position:absolute;left:388px;top:50px;width:953px;height:27px;background:#3e3f41;"></div>
<div style="position:absolute;left:387px;top:50px;width:89px;height:23px;background:#4e5254;"></div>
<div style="position:absolute;left:387px;top:73px;width:89px;height:4px;background:#4a88c7;"></div>
<svg style="position:absolute;left:395.5px;top:55px;" width="16" height="17" viewBox="0 0 16 17"><path d="M2.5 5 L6.5 1 V5 Z" fill="#9aa7b0"/><path d="M7.5 1 H12.5 V7.5 H2.5 V6 H7.5 Z" fill="#9aa7b0"/><rect x="0" y="8.5" width="15" height="7.5" fill="#a283d8"/><path d="M4.8 10.6 A2 2.2 0 1 0 4.8 14" stroke="#3a2a5a" stroke-width="1.1" fill="none"/><path d="M6.5 12.3 H9.5 M8 10.8 V13.8 M10.5 12.3 H13.5 M12 10.8 V13.8" stroke="#3a2a5a" stroke-width="1.1"/></svg>
<div class="t" style="left:415.3px;top:57.18px;font-size:11.6px;line-height:11.6px;color:#c8c8c8;font-weight:normal;letter-spacing:-0.324px;">main.cc</div>
<svg style="position:absolute;left:461px;top:60px;" width="6" height="6" viewBox="0 0 6 6"><path d="M0.3 0.3 L5.7 5.7 M5.7 0.3 L0.3 5.7" stroke="#747474" stroke-width="1"/></svg>
<div style="position:absolute;left:388px;top:77px;width:953px;height:656px;background:#2b2b2b;"></div>
<div style="position:absolute;left:388px;top:77px;width:55px;height:656px;background:#2f3233;"></div>
<div style="position:absolute;left:388px;top:308px;width:55px;height:21px;background:#323436;"></div>
<div style="position:absolute;left:443px;top:77px;width:1px;height:656px;background:#555555;"></div>
<div style="position:absolute;left:444px;top:308px;width:897px;height:21px;background:#323232;"></div>
<div style="position:absolute;left:929px;top:308px;width:33px;height:21px;background:#313b31;"></div>
<div style="position:absolute;left:1249px;top:77px;width:1px;height:656px;background:#444444;"></div>
<div class="m" style="-webkit-text-stroke:0;font-size:13px;letter-spacing:-0.3px;right:952.4px;top:82.04px;color:#5c5f61">1</div>
<div class="m" style="-webkit-text-stroke:0;font-size:13px;letter-spacing:-0.3px;right:952.4px;top:103.04px;color:#5c5f61">2</div>
<div class="m" style="-webkit-text-stroke:0;font-size:13px;letter-spacing:-0.3px;right:952.4px;top:124.04px;color:#5c5f61">3</div>
<div class="m" style="-webkit-text-stroke:0;font-size:13px;letter-spacing:-0.3px;right:952.4px;top:145.04px;color:#5c5f61">4</div>
<div class="m" style="-webkit-text-stroke:0;font-size:13px;letter-spacing:-0.3px;right:952.4px;top:166.04px;color:#5c5f61">5</div>
<div class="m" style="-webkit-text-stroke:0;font-size:13px;letter-spacing:-0.3px;right:952.4px;top:187.04px;color:#5c5f61">6</div>
<div class="m" style="-webkit-text-stroke:0;font-size:13px;letter-spacing:-0.3px;right:952.4px;top:208.04px;color:#5c5f61">7</div>
<div class="m" style="-webkit-text-stroke:0;font-size:13px;letter-spacing:-0.3px;right:952.4px;top:229.04px;color:#5c5f61">8</div>
<div class="m" style="-webkit-text-stroke:0;font-size:13px;letter-spacing:-0.3px;right:952.4px;top:250.04px;color:#5c5f61">9</div>
<div class="m" style="-webkit-text-stroke:0;font-size:13px;letter-spacing:-0.3px;right:952.4px;top:271.04px;color:#5c5f61">10</div>
<div class="m" style="-webkit-text-stroke:0;font-size:13px;letter-spacing:-0.3px;right:952.4px;top:292.04px;color:#5c5f61">11</div>
<div class="m" style="-webkit-text-stroke:0;font-size:13px;letter-spacing:-0.3px;right:952.4px;top:313.04px;color:#a4a3a3">12</div>
<div class="m" style="-webkit-text-stroke:0;font-size:13px;letter-spacing:-0.3px;right:952.4px;top:334.04px;color:#5c5f61">13</div>
<svg style="position:absolute;left:439px;top:166.5px;" width="9" height="11" viewBox="0 0 9 11"><path d="M0.5 0.5 H8.5 V7.5 L4.5 10.5 L0.5 7.5 Z" fill="#313335" stroke="#6f6f6f" stroke-width="1"/><path d="M2.5 4.5 H6.5" stroke="#8a8a8a" stroke-width="1"/></svg>
<svg style="position:absolute;left:439px;top:292.5px;" width="9" height="11" viewBox="0 0 9 11"><path d="M0.5 10.5 H8.5 V3.5 L4.5 0.5 L0.5 3.5 Z" fill="#313335" stroke="#6f6f6f" stroke-width="1"/><path d="M2.5 6.5 H6.5" stroke="#8a8a8a" stroke-width="1"/></svg>
<svg style="position:absolute;left:416px;top:313px;" width="8.5" height="10" viewBox="0 0 8.5 10"><path d="M0 0 L8.5 5 L0 10 Z" fill="#499c54"/></svg>
<div class="m" style="left:449px;top:80.72px;color:#a9b7c6"><span style="color:#bbb529">#include</span> <span style="color:#6a8759">"exe/main_common.h"</span></div>
<div class="m" style="left:449px;top:101.72px;color:#a9b7c6"></div>
<div class="m" style="left:449px;top:122.72px;color:#a9b7c6"><span style="color:#808080">// NOLINT(namespace-envoy)</span></div>
<div class="m" style="left:449px;top:143.72px;color:#a9b7c6"></div>
<div class="m" style="left:449px;top:164.72px;color:#a9b7c6"><span style="color:#629755;font-style:italic">/**</span></div>
<div class="m" style="left:449px;top:185.72px;color:#a9b7c6"><span style="color:#629755;font-style:italic"> * Basic Site-Specific main()</span></div>
<div class="m" style="left:449px;top:206.72px;color:#a9b7c6"><span style="color:#629755;font-style:italic"> *</span></div>
<div class="m" style="left:449px;top:227.72px;color:#a9b7c6"><span style="color:#629755;font-style:italic"> * This should be used to do setup tasks specific to a particular site's</span></div>
<div class="m" style="left:449px;top:248.72px;color:#a9b7c6"><span style="color:#629755;font-style:italic"> * deployment such as initializing signal handling. It calls main_common</span></div>
<div class="m" style="left:449px;top:269.72px;color:#a9b7c6"><span style="color:#629755;font-style:italic"> * after setting up command line options.</span></div>
<div class="m" style="left:449px;top:290.72px;color:#a9b7c6"><span style="color:#629755;font-style:italic"> */</span></div>
<div class="m" style="left:449px;top:311.72px;color:#a9b7c6"><span style="color:#cc7832">int</span> <span style="color:#ffc66d">main</span><span style="color:#a9b7c6">(</span><span style="color:#cc7832">int</span> <span style="color:#a9b7c6">argc</span><span style="color:#cc7832">,</span> <span style="color:#cc7832">char</span><span style="color:#a9b7c6">**</span> <span style="color:#a9b7c6">argv</span><span style="color:#a9b7c6">) { </span><span style="color:#cc7832">return</span> <span style="color:#b5b6e3">Envoy</span><span style="color:#a9b7c6">::</span><span style="color:#b5b6e3">MainCommon</span><span style="color:#a9b7c6">::</span><span style="color:#a9b7c6">main</span><span style="color:#a9b7c6">(argc</span><span style="color:#cc7832">,</span><span style="color:#a9b7c6"> argv)</span><span style="color:#cc7832">;</span><span style="color:#a9b7c6"> }</span></div>
<div class="m" style="left:449px;top:332.72px;color:#a9b7c6"></div>
<svg style="position:absolute;left:944px;top:311px;" width="10" height="21" viewBox="0 0 10 21"><g fill="none" stroke-linecap="square"><path d="M1.5 2 Q4.5 1.5 4.5 3 V17.5 Q4.5 19 1.5 19 M7.5 2 Q4.5 1.5 4.5 3 M7.5 19 Q4.5 19 4.5 17.5 M3.5 10.5 H5.5" stroke="#000" stroke-width="3"/><path d="M1.5 2 Q4.5 1.5 4.5 3 V17.5 Q4.5 19 1.5 19 M7.5 2 Q4.5 1.5 4.5 3 M7.5 19 Q4.5 19 4.5 17.5 M3.5 10.5 H5.5" stroke="#fff" stroke-width="1.2"/></g></svg>
<svg style="position:absolute;left:1321px;top:85px;" width="12" height="10" viewBox="0 0 12 10"><path d="M1 5 L4.5 8.5 L11 1.5" stroke="#499c54" stroke-width="2.2" fill="none"/></svg>
<div style="position:absolute;left:1325px;top:334px;width:15px;height:2px;background:#199c2f;"></div>
<div style="position:absolute;left:1226px;top:117px;width:56px;height:28px;background:#4b4e50;border-radius:1px"></div>
<svg style="position:absolute;left:1232px;top:123px;" width="18" height="17" viewBox="0 0 18 17"><path d="M1 11 V1.5 H3.5 L6 6 L8.5 1.5 H11 V11 H8.7 V5.5 L6.8 9 H5.2 L3.3 5.5 V11 Z" fill="#b0b0b0"/><path d="M10 11 A3.5 3.5 0 0 1 16 9.5 M16 13 A3.5 3.5 0 0 1 10 14.5" stroke="#3d95d0" stroke-width="1.6" fill="none"/></svg>
<svg style="position:absolute;left:1264px;top:127px;" width="8" height="8" viewBox="0 0 8 8"><path d="M0.5 0.5 L7.5 7.5 M7.5 0.5 L0.5 7.5" stroke="#8a8a8a" stroke-width="1"/></svg>
<div style="position:absolute;left:388px;top:733px;width:953px;height:1px;background:#3b3c3e;"></div>
<div style="position:absolute;left:388px;top:734px;width:953px;height:23px;background:#2f3233;"></div>
<svg style="position:absolute;left:454px;top:738px;" width="14" height="14" viewBox="0 0 14 14"><rect x="0" y="0" width="14" height="14" rx="2.5" fill="#b06675"/><text x="7" y="11" font-family="Liberation Sans" font-size="10" fill="#3b2024" text-anchor="middle">f</text></svg>
<div class="t" style="left:473px;top:739.00px;font-size:13px;line-height:13px;color:#bbbbbb;font-weight:normal;letter-spacing:-0.695px;">main</div>
<div style="position:absolute;left:1341px;top:50px;width:18px;height:707px;background:#3e3f41;"></div>
<div style="position:absolute;left:1341px;top:77px;width:1px;height:656px;background:#323232;"></div>
<svg style="position:absolute;left:1344px;top:59px;" width="12" height="14" viewBox="0 0 12 14"><ellipse cx="6" cy="2.5" rx="5.5" ry="2" fill="#bdbdbd"/><path d="M0.5 4.5 Q6 7 11.5 4.5 V6.5 Q6 9 0.5 6.5 Z M0.5 8 Q6 10.5 11.5 8 V10 Q6 12.5 0.5 10 Z M0.5 11.5 Q6 14 11.5 11.5 V13 Q6 14.5 0.5 13 Z" fill="#bdbdbd"/></svg>
<div class="t" style="-webkit-text-stroke:0;left:1356px;top:78px;font-size:11px;line-height:11px;color:#bbbbbb;font-weight:normal;letter-spacing:-0.136px;transform-origin:0 0;transform:rotate(90deg);">Database</div>
<div class="t" style="-webkit-text-stroke:0;left:1356px;top:721px;font-size:11px;line-height:11px;color:#bbbbbb;font-weight:normal;letter-spacing:-0.225px;transform-origin:0 0;transform:rotate(90deg);">make</div>
<div style="position:absolute;left:0px;top:756px;width:1359px;height:1px;background:#38393b;"></div>
<div style="position:absolute;left:0px;top:757px;width:1359px;height:20px;background:#3e3f41;"></div>
<div style="position:absolute;left:0px;top:777px;width:1359px;height:1px;background:#47484a;"></div>
<svg style="position:absolute;left:31px;top:761px;" width="12" height="13" viewBox="0 0 12 13"><path d="M1.5 1 V12 M1.5 7.5 H6 V3.5 M3.5 3.5 H10 M7.5 1 L10 3.5 L7.5 6" stroke="#bdbdbd" stroke-width="1.5" fill="none"/></svg>
<div class="t" style="left:47px;top:762.27px;font-size:11.5px;line-height:11.5px;color:#bbbbbb;font-weight:normal;letter-spacing:-0.332px;">Git</div>
<svg style="position:absolute;left:81px;top:762px;" width="11" height="10" viewBox="0 0 11 10"><path d="M0 1 H2 M0 5 H2 M0 9 H2 M3.5 1 H11 M3.5 5 H11 M3.5 9 H11" stroke="#bdbdbd" stroke-width="1.6"/></svg>
<div class="t" style="left:97px;top:762.27px;font-size:11.5px;line-height:11.5px;color:#bbbbbb;font-weight:normal;letter-spacing:-1.003px;">TODO</div>
<svg style="position:absolute;left:145px;top:761px;" width="15" height="13" viewBox="0 0 15 13"><path d="M1 2 L5 2 L8 6 L12 3 M4 6 L8 10 L13 8 M6 11 L9 12" stroke="#4a78c0" stroke-width="1.8" fill="none"/></svg>
<div class="t" style="left:163px;top:762.27px;font-size:11.5px;line-height:11.5px;color:#bbbbbb;font-weight:normal;letter-spacing:-0.242px;">Buck</div>
<svg style="position:absolute;left:207px;top:761px;" width="12" height="12" viewBox="0 0 12 12"><path d="M6 0.5 L11.8 11.5 H0.2 Z" fill="#bdbdbd"/><path d="M6 6.5 L7.6 9.6 H4.4 Z" fill="#3e3f41"/></svg>
<div class="t" style="left:224px;top:762.27px;font-size:11.5px;line-height:11.5px;color:#bbbbbb;font-weight:normal;letter-spacing:-0.485px;">CMake</div>
<svg style="position:absolute;left:280px;top:761px;" width="12" height="12" viewBox="0 0 12 12"><circle cx="6" cy="6" r="5.5" fill="#bdbdbd"/><path d="M6 2.5 V7" stroke="#3c3f41" stroke-width="1.8"/><circle cx="6" cy="9" r="1" fill="#3c3f41"/></svg>
<div class="t" style="left:297px;top:762.27px;font-size:11.5px;line-height:11.5px;color:#bbbbbb;font-weight:normal;letter-spacing:-0.259px;">Problems</div>
<svg style="position:absolute;left:363px;top:761px;" width="12" height="12" viewBox="0 0 12 12"><rect x="0" y="0" width="12" height="12" fill="#bdbdbd"/><path d="M2.5 3 L5 5.5 L2.5 8 M6 9.5 H10" stroke="#3c3f41" stroke-width="1.3" fill="none"/></svg>
<div class="t" style="left:380px;top:762.27px;font-size:11.5px;line-height:11.5px;color:#bbbbbb;font-weight:normal;letter-spacing:-0.432px;">Terminal</div>
<svg style="position:absolute;left:440px;top:761px;" width="13" height="13" viewBox="0 0 13 13"><path d="M1 4 L6 0.5 L8 2.5 L5.5 5 L12 11.5 L10.5 13 L4 6.5 L2.5 7.5 Z" fill="#bdbdbd"/></svg>
<div class="t" style="left:457px;top:762.27px;font-size:11.5px;line-height:11.5px;color:#bbbbbb;font-weight:normal;letter-spacing:-0.215px;">Build</div>
<svg style="position:absolute;left:1264px;top:760px;" width="14" height="14" viewBox="0 0 14 14"><circle cx="6.8" cy="6.8" r="6.5" fill="#499c54"/><rect x="6.8" y="6.8" width="6.5" height="6.7" fill="#499c54"/><path d="M5 4.8 L7.3 3.3 V10.5" stroke="#fff" stroke-width="1.8" fill="none"/></svg>
<div class="t" style="left:1281.5px;top:762.27px;font-size:11.5px;line-height:11.5px;color:#bbbbbb;font-weight:normal;letter-spacing:-0.477px;">Event Log</div>
<div style="position:absolute;left:0px;top:778px;width:1359px;height:20px;background:#3e3f41;"></div>
<svg style="position:absolute;left:5px;top:781px;" width="14" height="14" viewBox="0 0 14 14"><rect x="3.6" y="1.6" width="9" height="9" stroke="#c4c4c4" stroke-width="1.2" fill="none"/><path d="M1.6 3.5 V12.6 H10.5" stroke="#c4c4c4" stroke-width="1.2" fill="none"/></svg>
<div class="t" style="left:31.3px;top:782.52px;font-size:11.2px;line-height:11.2px;color:#b4b4b4;font-weight:normal;letter-spacing:-0.043px;">Updated Protocol Buffer Editor plugin to version 2.... (today 9:57</div>
<svg style="position:absolute;left:349px;top:783px;" width="26" height="12" viewBox="0 0 26 12"><path d="M5 0.3 V10 M5 4.8 H9 M0.3 10 H10" stroke="#b4b4b4" stroke-width="1.1" fill="none"/><path d="M14.3 0.3 L12.6 3.3 M13.2 2.8 H20.8 M11.5 6.5 H21.8 M16.7 2.8 V11.5" stroke="#b4b4b4" stroke-width="1.1" fill="none"/><path d="M22.8 0.5 Q25.3 5.5 22.8 11.5" stroke="#b4b4b4" stroke-width="1.1" fill="none"/></svg>
<svg style="position:absolute;left:867px;top:781px;" width="14" height="14" viewBox="0 0 14 14"><path d="M1 0.5 H5 V13.5 H1 Z" fill="#2fd56a"/><path d="M9.5 0.5 H13.5 L5 13.5 H1 Z" fill="#2a9ad6"/><path d="M1 9.5 L4 13.5 H1 Z M5 7.5 V11.5 L2.6 11.5 Z" fill="#27b5a8"/></svg>
<div class="t" style="left:892px;top:782.52px;font-size:11.2px;line-height:11.2px;color:#bbbbbb;font-weight:normal;letter-spacing:-0.106px;">12:63</div>
<div class="t" style="left:932.4px;top:782.52px;font-size:11.2px;line-height:11.2px;color:#bbbbbb;font-weight:normal;letter-spacing:-0.735px;">LF</div>
<div class="t" style="left:956px;top:782.52px;font-size:11.2px;line-height:11.2px;color:#bbbbbb;font-weight:normal;letter-spacing:-0.026px;">UTF-8</div>
<div class="t" style="left:1001px;top:782.52px;font-size:11.2px;line-height:11.2px;color:#bbbbbb;font-weight:normal;letter-spacing:-0.158px;">ClangFormat</div>
<div class="t" style="left:1075.5px;top:782.52px;font-size:11.2px;line-height:11.2px;color:#8a8a8a;font-weight:normal;letter-spacing:-0.024px;">C++: istio-proxy | Debug</div>
<svg style="position:absolute;left:1209px;top:781px;" width="14" height="15" viewBox="0 0 14 15"><path d="M2.2 2 V13.5 M9.5 2.5 Q9.5 7.5 2.5 9.5" stroke="#bdbdbd" stroke-width="1.4" fill="none"/><circle cx="2.2" cy="1.8" r="1.5" fill="#bdbdbd"/><circle cx="2.2" cy="13.5" r="1.5" fill="#bdbdbd"/><circle cx="9.5" cy="2.2" r="1.5" fill="#bdbdbd"/><circle cx="10.5" cy="11.5" r="3.2" fill="#3592c4"/></svg>
<div class="t" style="left:1224px;top:782.52px;font-size:11.2px;line-height:11.2px;color:#c8c8c8;font-weight:normal;letter-spacing:-0.140px;">release-1.9</div>
<svg style="position:absolute;left:1287px;top:782px;" width="13" height="13" viewBox="0 0 13 13"><path d="M3 6 V3.5 A3 3 0 0 1 9 3.5" stroke="#bdbdbd" stroke-width="1.5" fill="none"/><rect x="4" y="6" width="8" height="6.5" fill="#bdbdbd"/></svg>
<svg style="position:absolute;left:1310px;top:780px;" width="18" height="16" viewBox="0 0 18 16"><path d="M3 11 A3 3 0 0 1 2.5 5.2 A4.5 4.5 0 0 1 11 4 A3.5 3.5 0 0 1 15 9 L12 11 Z" fill="#bdbdbd"/><path d="M6 5.5 Q6 3 8 3 Q10 3 10 5 Q10 6.5 8 7 V8.5" stroke="#3c3f41" stroke-width="1.3" fill="none"/><circle cx="8" cy="10" r="0.8" fill="#3c3f41"/><circle cx="13.5" cy="12.5" r="3.8" fill="#bdbdbd" stroke="#3c3f41" stroke-width="1.2"/><circle cx="13.5" cy="12.5" r="1.3" fill="#3c3f41"/></svg>
<svg style="position:absolute;left:1337px;top:781px;" width="14" height="14" viewBox="0 0 14 14"><circle cx="7" cy="7" r="6.3" fill="#5a5c5e"/><circle cx="7" cy="5.5" r="2.3" fill="#3c3f41"/><path d="M2.5 11.5 Q7 7.5 11.5 11.5" stroke="#3c3f41" stroke-width="2" fill="none"/></svg>
</body></html>
